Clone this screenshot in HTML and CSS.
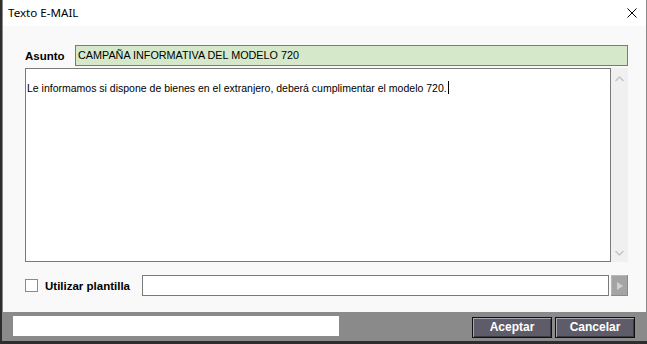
FILE: index.html
```html
<!DOCTYPE html>
<html lang="es">
<head>
<meta charset="utf-8">
<title>Texto E-MAIL</title>
<link rel="stylesheet" href="styles.css">
</head>
<body>
<div class="window">
  <div class="titlebar">
    <span class="title">Texto E-MAIL</span>
    <svg class="close" width="10" height="10" viewBox="0 0 10 10"><path d="M0.5 0.5L9.5 9.5M9.5 0.5L0.5 9.5" stroke="#000" stroke-width="1" fill="none"/></svg>
  </div>
  <div class="content">
    <div class="row subject-row">
      <span class="label">Asunto</span>
      <div class="subject">CAMPAÑA INFORMATIVA DEL MODELO 720</div>
    </div>
    <div class="editor-row">
      <div class="editor">Le informamos si dispone de bienes en el extranjero, deberá cumplimentar el modelo 720.<span class="caret"></span></div>
      <div class="scrollbar">
        <svg width="9" height="6" viewBox="0 0 9 6"><path d="M0.5 5L4.5 1L8.5 5" stroke="#c4c4c4" stroke-width="1.4" fill="none"/></svg>
        <svg width="9" height="6" viewBox="0 0 9 6"><path d="M0.5 1L4.5 5L8.5 1" stroke="#c4c4c4" stroke-width="1.4" fill="none"/></svg>
      </div>
    </div>
    <div class="row template-row">
      <span class="checkbox"></span>
      <span class="label tlabel">Utilizar plantilla</span>
      <div class="tinput"></div>
      <div class="tbutton"><svg width="6" height="8" viewBox="0 0 6 8"><path d="M0 0L6 4L0 8Z" fill="#d0d0d0"/></svg></div>
    </div>
  </div>
  <div class="footer">
    <div class="status"></div>
    <div class="buttons">
      <button class="btn">Aceptar</button>
      <button class="btn">Cancelar</button>
    </div>
  </div>
</div>
</body>
</html>
```

FILE: styles.css
```css
html, body {
  margin: 0;
  padding: 0;
}
body {
  width: 647px;
  height: 344px;
  background: #2e2e2e;
  overflow: hidden;
  font-family: "Liberation Sans", Arial, sans-serif;
}
.window {
  margin-left: 2px;
  width: 643px;
  height: 340px;
  border: 1px solid #8a8a8a;
  border-top: 0;
  background: #f9f9f9;
  display: flex;
  flex-direction: column;
}
.titlebar {
  height: 26px;
  background: #fff;
  display: flex;
  align-items: center;
  justify-content: space-between;
  padding: 0 9px 0 5px;
}
.title {
  font-family: "Noto Sans", "Open Sans", sans-serif;
  font-size: 11.6px;
  color: #000;
  margin-top: -1px;
}
.content {
  flex: 1;
  padding: 19px 18px 0 22px;
  display: flex;
  flex-direction: column;
}
.row {
  display: flex;
  align-items: center;
}
.label {
  font-weight: bold;
  font-size: 11.5px;
  color: #000;
}
.subject-row .label {
  width: 50px;
}
.subject {
  flex: 1;
  height: 19px;
  border: 1px solid #7a7a7a;
  background: #d5e8ca;
  font-size: 10.8px;
  line-height: 19px;
  padding-left: 2px;
  color: #000;
}
.editor-row {
  display: flex;
  margin-top: 2px;
  height: 194px;
}
.editor {
  flex: 1;
  border: 1px solid #7a7a7a;
  background: #fff;
  font-size: 10.5px;
  padding: 12px 0 0 1px;
  color: #000;
  white-space: nowrap;
}
.caret {
  display: inline-block;
  width: 1px;
  height: 13px;
  background: #000;
  vertical-align: -2px;
  margin-left: 1px;
}
.scrollbar {
  width: 17px;
  background: #f0f0f0;
  display: flex;
  flex-direction: column;
  justify-content: space-between;
  align-items: center;
  padding: 8px 0 6px;
}
.template-row {
  margin-top: 13px;
}
.checkbox {
  width: 11px;
  height: 11px;
  border: 1px solid #8a8a8a;
  background: #fff;
  margin-right: 7px;
}
.tlabel {
  width: 97px;
}
.tinput {
  flex: 1;
  height: 19px;
  border: 1px solid #7a7a7a;
  background: #fff;
}
.tbutton {
  width: 17px;
  height: 21px;
  margin-left: 2px;
  background: #a4a4a4;
  box-shadow: inset -1px -1px 0 #8a8a8a, inset 1px 1px 0 #b8b8b8;
  display: flex;
  align-items: center;
  justify-content: center;
}
.footer {
  height: 28px;
  background: #8a8a8a;
  display: flex;
  align-items: center;
  justify-content: space-between;
  padding: 0 11px 0 10px;
}
.status {
  width: 326px;
  height: 20px;
  background: #fff;
}
.buttons {
  display: flex;
  gap: 3px;
  margin-top: 2px;
}
.btn {
  width: 80px;
  height: 21px;
  margin: 0;
  padding: 0;
  background: #5e5c68;
  border: 1px solid #111;
  box-shadow: inset 1px 1px 0 #a8a6b0, inset -1px -1px 0 #3a3a42;
  color: #fff;
  font-family: "Liberation Sans", Arial, sans-serif;
  font-weight: bold;
  font-size: 12px;
}
```
